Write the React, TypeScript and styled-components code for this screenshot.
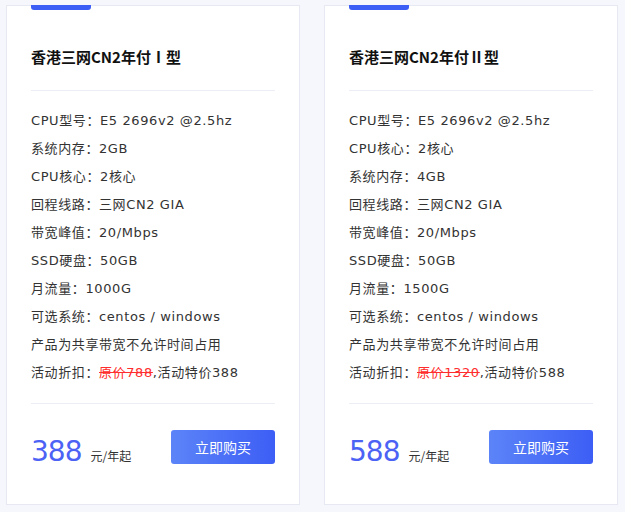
import React from "react";
import styled, { createGlobalStyle } from "styled-components";

const GlobalStyle = createGlobalStyle`
  html, body {
    margin: 0;
    padding: 0;
    background: #f5f7fc;
  }
  body {
    font-family: "DejaVu Sans", "Noto Sans CJK SC", sans-serif;
  }
`;

const Page = styled.div`
  display: flex;
  gap: 24px;
  padding: 5px 0 0 6px;
`;

const Card = styled.div`
  box-sizing: border-box;
  width: 294px;
  height: 500px;
  background: #ffffff;
  border: 1px solid #e6e9f2;
  padding: 0 24px;
  display: flex;
  flex-direction: column;
`;

const TopBar = styled.div`
  width: 60px;
  height: 5px;
  margin-top: -1px;
  background: #3d5ef5;
  border-radius: 0 0 3px 3px;
`;

const Title = styled.h3`
  margin: 35px 0 0;
  font-size: 15px;
  line-height: 24px;
  font-weight: 700;
  color: #111;
  font-family: "Noto Sans CJK SC", sans-serif;
`;

const Divider = styled.div<{ $top: number }>`
  height: 1px;
  background: #eceef5;
  margin-top: ${(p) => p.$top}px;
`;

const SpecList = styled.ul`
  list-style: none;
  margin: 0;
  padding: 16px 0 16px;
`;

const Spec = styled.li`
  font-size: 13px;
  line-height: 28px;
  color: #333;
  letter-spacing: 0.6px;
  white-space: nowrap;
`;

const Strike = styled.del`
  color: #ff2d2d;
  text-decoration-color: #ff2d2d;
`;

const Footer = styled.div`
  margin-top: 26px;
  display: flex;
  align-items: flex-start;
  justify-content: space-between;
`;

const PriceBox = styled.div`
  display: flex;
  align-items: baseline;
  margin-top: 8px;
  line-height: 28px;
`;

const Price = styled.span`
  font-family: "DejaVu Sans", sans-serif;
  font-size: 28px;
  font-weight: 400;
  letter-spacing: -1px;
  color: #4c62f5;
`;

const Unit = styled.span`
  margin-left: 9px;
  font-size: 12px;
  color: #333;
  font-family: "Noto Sans CJK SC", sans-serif;
`;

const BuyButton = styled.button`
  width: 104px;
  height: 34px;
  border: none;
  border-radius: 3px;
  background: linear-gradient(90deg, #5c84f8 0%, #3d5ef5 100%);
  color: #fff;
  font-size: 14px;
  font-family: "Noto Sans CJK SC", sans-serif;
  cursor: pointer;
`;

type Plan = {
  title: string;
  specs: React.ReactNode[];
  price: string;
};

const plans: Plan[] = [
  {
    title: "香港三网CN2年付Ⅰ型",
    specs: [
      "CPU型号：E5 2696v2 @2.5hz",
      "系统内存：2GB",
      "CPU核心：2核心",
      "回程线路：三网CN2 GIA",
      "带宽峰值：20/Mbps",
      "SSD硬盘：50GB",
      "月流量：1000G",
      "可选系统：centos / windows",
      "产品为共享带宽不允许时间占用",
      <>
        活动折扣：<Strike>原价788</Strike>,活动特价388
      </>,
    ],
    price: "388",
  },
  {
    title: "香港三网CN2年付Ⅱ型",
    specs: [
      "CPU型号：E5 2696v2 @2.5hz",
      "CPU核心：2核心",
      "系统内存：4GB",
      "回程线路：三网CN2 GIA",
      "带宽峰值：20/Mbps",
      "SSD硬盘：50GB",
      "月流量：1500G",
      "可选系统：centos / windows",
      "产品为共享带宽不允许时间占用",
      <>
        活动折扣：<Strike>原价1320</Strike>,活动特价588
      </>,
    ],
    price: "588",
  },
];

export default function App() {
  return (
    <>
      <GlobalStyle />
      <Page>
        {plans.map((plan) => (
          <Card key={plan.title}>
            <TopBar />
            <Title>{plan.title}</Title>
            <Divider $top={21} />
            <SpecList>
              {plan.specs.map((s, i) => (
                <Spec key={i}>{s}</Spec>
              ))}
            </SpecList>
            <Divider $top={0} />
            <Footer>
              <PriceBox>
                <Price>{plan.price}</Price>
                <Unit>元/年起</Unit>
              </PriceBox>
              <BuyButton>立即购买</BuyButton>
            </Footer>
          </Card>
        ))}
      </Page>
    </>
  );
}
